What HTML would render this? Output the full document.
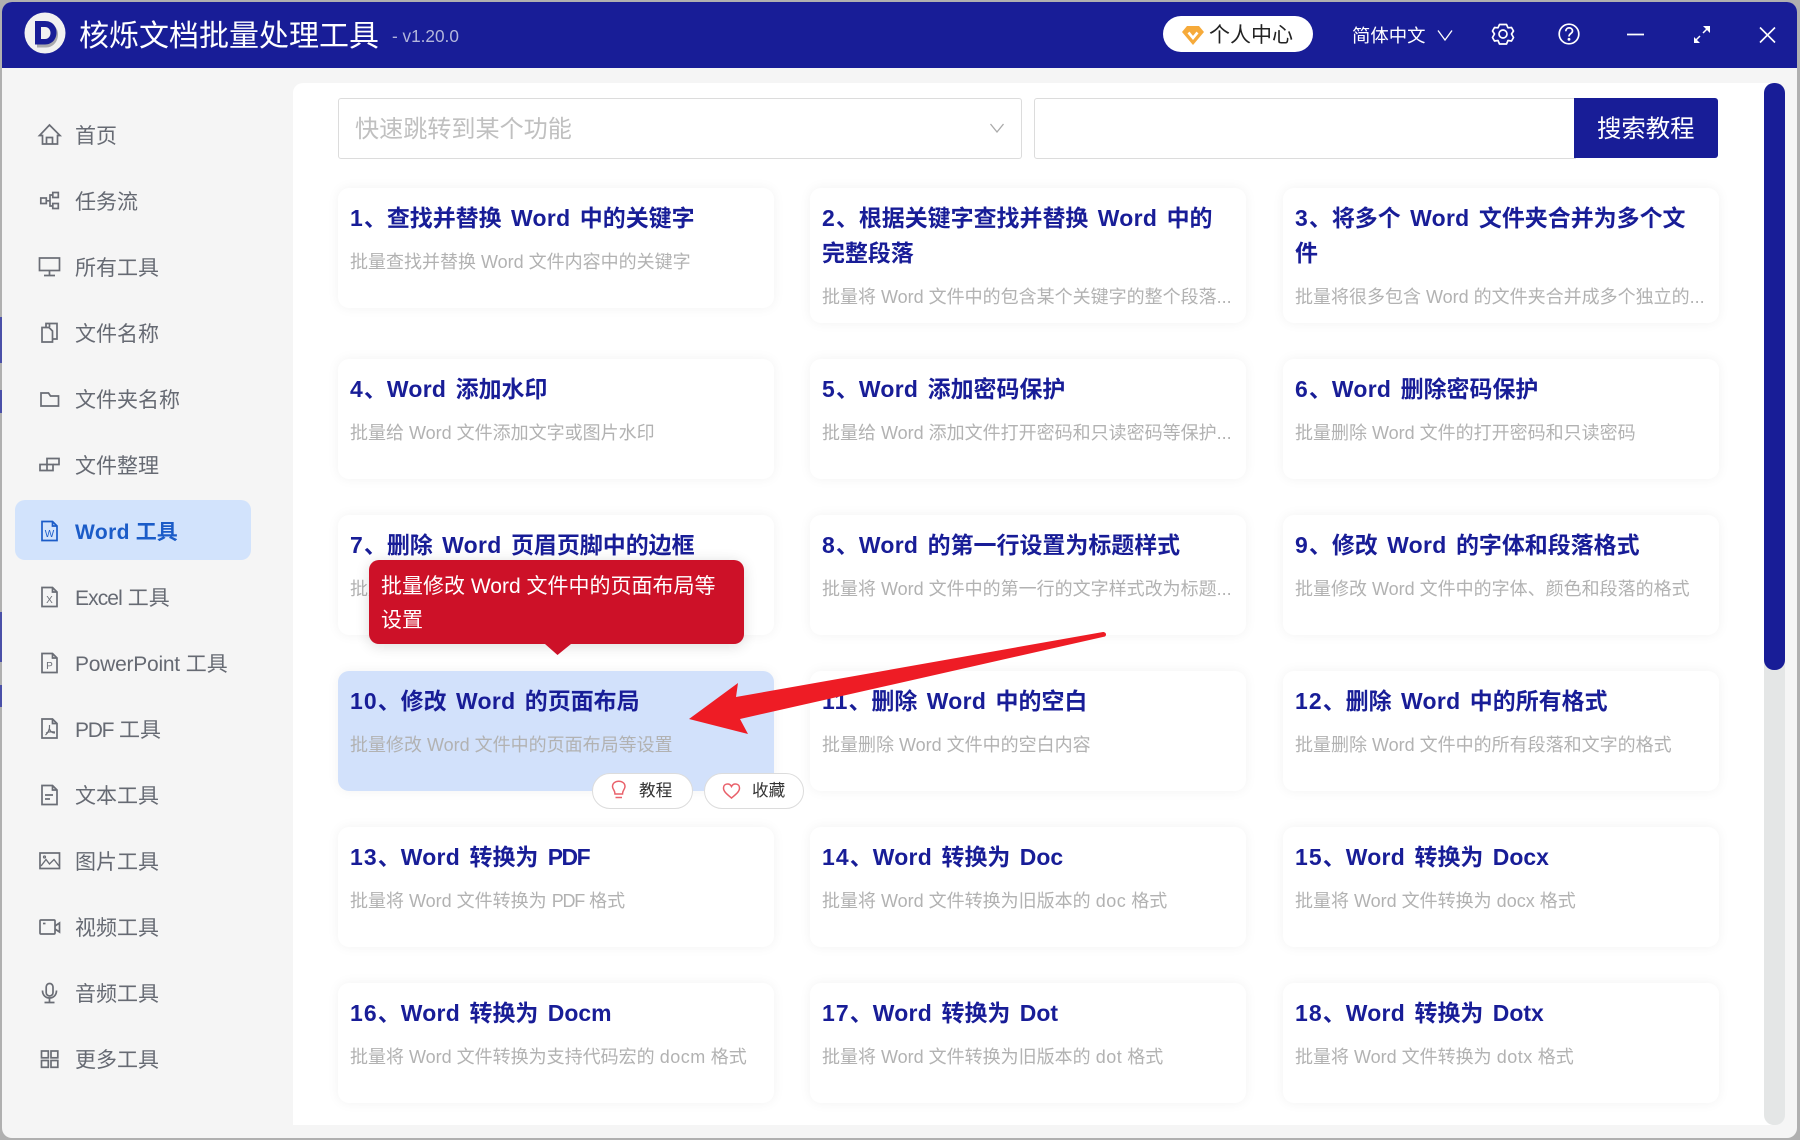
<!DOCTYPE html>
<html lang="zh-CN">
<head>
<meta charset="utf-8">
<title>核烁文档批量处理工具</title>
<style>
html,body{margin:0;padding:0;width:1800px;height:1140px;overflow:hidden;background:#b0b0b0;}
body{position:relative;font-family:"Liberation Sans","Noto Sans CJK SC",sans-serif;}
.a{position:absolute;}
.t{position:absolute;white-space:nowrap;}
#win{position:absolute;left:2px;top:2px;width:1795px;height:1136px;background:#f5f5f5;border-radius:10px;overflow:hidden;}
#head{position:absolute;left:0;top:0;width:100%;height:66px;background:#181d97;}
.nav{position:absolute;left:75px;font-size:21px;line-height:30px;color:#666a73;white-space:nowrap;}
.card{position:absolute;width:436px;height:120px;background:#fff;border-radius:11px;box-shadow:0 0 12px rgba(0,0,0,.055);}
.card b{position:absolute;left:12px;top:13px;width:416px;font-size:22.96px;line-height:34.5px;font-weight:700;color:#181d97;word-spacing:3px;}
.card b u{text-decoration:none;letter-spacing:.3px;}
.card b u.n{letter-spacing:1.1px;}
.card b u.p{letter-spacing:-1.5px;}
.card span{position:absolute;left:12px;top:60px;font-size:18px;line-height:29px;color:#b2b2b2;white-space:nowrap;}
.card span em{font-style:normal;letter-spacing:.5px;}
.card span em.p{letter-spacing:-1.2px;}
.tall{height:135px;}
.tall span{top:95px;}
.pill{position:absolute;top:773px;height:34px;background:#fff;border:1px solid #dcdcdc;border-radius:18px;}
.pill i{position:absolute;top:3px;font-style:normal;font-size:16.6px;line-height:28px;color:#333;white-space:nowrap;}
</style>
</head>
<body>
<div class="a" style="left:0;top:317px;width:2px;height:46px;background:#4a50a8"></div>
<div class="a" style="left:0;top:390px;width:2px;height:23px;background:#4a50a8"></div>
<div class="a" style="left:0;top:612px;width:2px;height:50px;background:#4a50a8"></div>
<div class="a" style="left:0;top:685px;width:2px;height:22px;background:#4a50a8"></div>

<div id="win">
  <div id="head"></div>
</div>

<!-- logo -->
<svg class="a" style="left:20px;top:8px" width="52" height="52" viewBox="0 0 52 52">
  <circle cx="25" cy="25" r="20.5" fill="#f1f1f1"/>
  <path d="M16 14H25C33 14 37 19 37 25C37 32 32 38 25 38H16Z" fill="#a9a9ad" transform="translate(1 1.5)"/>
  <path d="M15 13H25C32.5 13 36.500 18.500 36.500 24.500C36.500 31 32 36.500 25 36.500H15Z" fill="#181d97"/>
  <path d="M21 19V31H25C28.500 31 30.500 28 30.500 25C30.500 22 28.500 19 25 19Z" fill="#f1f1f1"/>
</svg>
<div class="t" style="left:79px;top:17px;font-size:30px;line-height:40px;color:#fff">核烁文档批量处理工具</div>
<div class="t" style="left:392px;top:22px;font-size:17.2px;line-height:28px;color:#b3b6dc">- v1.20.0</div>

<!-- pill -->
<div class="a" style="left:1163px;top:16px;width:150px;height:36px;background:#fff;border-radius:18px"></div>
<svg class="a" style="left:1180px;top:23px" width="26" height="24" viewBox="0 0 26 24">
  <path d="M7 3H19L24 9L13 22L2 9Z" fill="#f6aa3a"/>
  <path d="M8.500 9.500L13 15L17.500 9.500" fill="none" stroke="#fff" stroke-width="2.600"/>
</svg>
<div class="t" style="left:1209px;top:20px;font-size:21px;line-height:32px;color:#222">个人中心</div>
<div class="t" style="left:1352px;top:22px;font-size:18.4px;line-height:28px;color:#fff">简体中文</div>

<!-- header icons -->
<svg class="a" style="left:1430px;top:0" width="370" height="68" viewBox="1430 0 370 68" fill="none" stroke="#fff" stroke-width="1.700">
  <path d="M1438 30.500L1445 40L1452 30.500" stroke-width="1.300"/>
  <path d="M1499.500 24.500H1506.500L1508 27.800L1511.500 27.500L1513.500 31L1511.500 34L1513.500 37.500L1511.500 41L1508 40.500L1506.500 44H1499.500L1498 40.500L1494.500 41L1492.500 37.500L1494.500 34L1492.500 31L1494.500 27.500L1498 27.800Z" stroke-linejoin="round"/>
  <circle cx="1503" cy="34" r="4"/>
  <circle cx="1569" cy="34" r="9.800"/>
  <path d="M1565.800 31.300C1565.800 26.800 1572.500 26.800 1572.500 31C1572.500 33.500 1569 33.500 1569 36.500"/>
  <circle cx="1569" cy="39.300" r=".6" fill="#fff"/>
  <path d="M1627 34.500H1644" stroke-width="1.800"/>
  <path d="M1695 41L1700 36M1703 33L1708 28" stroke-width="1.500"/>
  <path d="M1694 37V43H1700Z" fill="#fff" stroke="none"/>
  <path d="M1703 26H1710V33Z" fill="#fff" stroke="none"/>
  <path d="M1760 27.500L1775 42.500M1775 27.500L1760 42.500" stroke-width="1.600"/>
</svg>

<!-- sidebar -->
<div class="a" style="left:15px;top:500px;width:236px;height:60px;background:#d2e3fc;border-radius:10px"></div>
<div class="nav" style="top:122px">首页</div>
<div class="nav" style="top:188px">任务流</div>
<div class="nav" style="top:254px">所有工具</div>
<div class="nav" style="top:320px">文件名称</div>
<div class="nav" style="top:386px">文件夹名称</div>
<div class="nav" style="top:452px">文件整理</div>
<div class="nav" style="top:518px;color:#1b5cc8;font-weight:700"><span style="letter-spacing:.4px">Word</span> 工具</div>
<div class="nav" style="top:584px"><span style="letter-spacing:-.9px">Excel</span> 工具</div>
<div class="nav" style="top:650px"><span style="letter-spacing:-.25px">PowerPoint</span> 工具</div>
<div class="nav" style="top:716px"><span style="letter-spacing:-1.3px">PDF</span> 工具</div>
<div class="nav" style="top:782px">文本工具</div>
<div class="nav" style="top:848px">图片工具</div>
<div class="nav" style="top:914px">视频工具</div>
<div class="nav" style="top:980px">音频工具</div>
<div class="nav" style="top:1046px">更多工具</div>

<svg class="a" style="left:0;top:0" width="255" height="1140" viewBox="0 0 255 1140" fill="none" stroke="#6a6d75" stroke-width="1.700">
  <path d="M49.500 125L39.500 135.500H42.500V144H57.500V135.500H60Z"/><path d="M46.500 144V137.500H52.500V144"/>
  <rect x="40.800" y="198" width="5.500" height="5.500"/><rect x="52.800" y="192.500" width="5.500" height="5"/><rect x="52.800" y="203.500" width="5.500" height="5"/><path d="M46.300 200.800H50V195H52.800M50 200.800V206H52.800"/>
  <rect x="39.500" y="258" width="20" height="12.500"/><path d="M49.500 270.500V275M44 275.500H55"/>
  <path d="M46 327V323.500H57V339H52.500"/><path d="M42 327.500H49L52.500 331V342H42Z"/><path d="M49.500 323.500V327"/>
  <path d="M41 393H48.500L50.500 396H58.500V406H41Z"/>
  <path d="M47 464V458.500H59V464.500H53"/><path d="M40 464.500H53V470.500H40ZM47 464.500V470.500"/>
  <g stroke="#1b5cc8"><path d="M42 521.500H52.500L57 526V540.500H42Z"/><path d="M52.500 521.500V526H57"/></g>
  <path d="M42 587.500H52.500L57 592V606.500H42Z"/><path d="M52.500 587.500V592H57"/>
  <path d="M42 653.500H52.500L57 658V672.500H42Z"/><path d="M52.500 653.500V658H57"/>
  <path d="M42 719H52.500L57 723.500V738H42Z"/><path d="M52.500 719V723.500H57"/>
  <path d="M49.500 725C50 729 48 733 45.500 735M49.500 729C50.500 732 53 733 55 733M46 733C49 731.500 52 731.500 55 732" stroke-width="1.200"/>
  <path d="M42 785.500H52.500L57 790V804.500H42Z"/><path d="M52.500 785.500V790H57"/><path d="M45 795H53M45 799H50"/>
  <rect x="40" y="853" width="19.500" height="15.500"/><path d="M41 866L46 859.500L49.500 864L54 859.500L59 866" stroke-width="1.400"/><circle cx="44.500" cy="857" r="1" stroke-width="1.200"/>
  <rect x="40" y="920" width="15" height="14" rx="1"/><path d="M55 926L59.500 923V932L55 929"/><path d="M43 923.500H45.500"/>
  <rect x="46.200" y="983.500" width="6.800" height="12.500" rx="3.400"/><path d="M42.500 990.500C42.500 1000.500 56.500 1000.500 56.500 990.500M49.500 998V1002M44.500 1002.500H54.500"/>
  <rect x="41.500" y="1051" width="6.800" height="6.800"/><rect x="51" y="1051" width="6.800" height="6.800"/><rect x="41.500" y="1060.500" width="6.800" height="6.800"/><rect x="51" y="1060.500" width="6.800" height="6.800"/>
  <g font-family="Liberation Sans,sans-serif" font-size="10" text-anchor="middle" stroke="none">
    <text x="49.500" y="537" fill="#1b5cc8">W</text>
    <text x="49.500" y="603" fill="#6a6d75">X</text>
    <text x="49.500" y="669" fill="#6a6d75">P</text>
  </g>
</svg>

<!-- main panel -->
<div class="a" style="left:293px;top:83px;width:1482px;height:1042px;background:#fff;border-radius:10px 0 0 0"></div>
<div class="a" style="left:1764px;top:83px;width:21px;height:1042px;background:#e4e6e6;border-radius:10px"></div>
<div class="a" style="left:1764px;top:83px;width:21px;height:587px;background:#181d97;border-radius:10px"></div>

<!-- search -->
<div class="a" style="left:338px;top:98px;width:682px;height:59px;background:#fff;border:1px solid #dcdcdc;border-radius:3px"></div>
<div class="t" style="left:355px;top:112px;font-size:24.1px;line-height:36px;color:#c0c0c0">快速跳转到某个功能</div>
<svg class="a" style="left:988px;top:121px" width="18" height="14" viewBox="0 0 18 14" fill="none" stroke="#aaa" stroke-width="1.300"><path d="M2.500 3L9 11L15.500 3"/></svg>
<div class="a" style="left:1034px;top:98px;width:540px;height:59px;background:#fff;border:1px solid #dcdcdc;border-radius:3px 0 0 3px"></div>
<div class="a" style="left:1574px;top:98px;width:144px;height:60px;background:#181d97;border-radius:0 3px 3px 0"></div>
<div class="t" style="left:1597px;top:112px;font-size:24.400px;line-height:36px;color:#fff">搜索教程</div>

<!-- cards -->
<div class="card" style="left:338px;top:188px"><b><u class="n">1</u>、查找并替换 <u>Word</u> 中的关键字</b><span>批量查找并替换 Word 文件内容中的关键字</span></div>
<div class="card tall" style="left:810px;top:188px"><b><u class="n">2</u>、根据关键字查找并替换 <u>Word</u> 中的<br>完整段落</b><span>批量将 Word 文件中的包含某个关键字的整个段落...</span></div>
<div class="card tall" style="left:1283px;top:188px"><b><u class="n">3</u>、将多个 <u>Word</u> 文件夹合并为多个文<br>件</b><span>批量将很多包含 Word 的文件夹合并成多个独立的...</span></div>

<div class="card" style="left:338px;top:359px"><b><u class="n">4</u>、<u>Word</u> 添加水印</b><span>批量给 Word 文件添加文字或图片水印</span></div>
<div class="card" style="left:810px;top:359px"><b><u class="n">5</u>、<u>Word</u> 添加密码保护</b><span>批量给 Word 添加文件打开密码和只读密码等保护...</span></div>
<div class="card" style="left:1283px;top:359px"><b><u class="n">6</u>、<u>Word</u> 删除密码保护</b><span>批量删除 Word 文件的打开密码和只读密码</span></div>

<div class="card" style="left:338px;top:515px"><b><u class="n">7</u>、删除 <u>Word</u> 页眉页脚中的边框</b><span>批量删除 Word 文件中的页眉页脚的边框</span></div>
<div class="card" style="left:810px;top:515px"><b><u class="n">8</u>、<u>Word</u> 的第一行设置为标题样式</b><span>批量将 Word 文件中的第一行的文字样式改为标题...</span></div>
<div class="card" style="left:1283px;top:515px"><b><u class="n">9</u>、修改 <u>Word</u> 的字体和段落格式</b><span>批量修改 Word 文件中的字体、颜色和段落的格式</span></div>

<div class="card" style="left:338px;top:671px;background:#d2e1fb"><b><u class="n">10</u>、修改 <u>Word</u> 的页面布局</b><span>批量修改 Word 文件中的页面布局等设置</span></div>
<div class="card" style="left:810px;top:671px"><b><u class="n">11</u>、删除 <u>Word</u> 中的空白</b><span>批量删除 Word 文件中的空白内容</span></div>
<div class="card" style="left:1283px;top:671px"><b><u class="n">12</u>、删除 <u>Word</u> 中的所有格式</b><span>批量删除 Word 文件中的所有段落和文字的格式</span></div>

<div class="card" style="left:338px;top:827px"><b><u class="n">13</u>、<u>Word</u> 转换为 <u class="p">PDF</u></b><span>批量将 Word 文件转换为 <em class="p">PDF</em> 格式</span></div>
<div class="card" style="left:810px;top:827px"><b><u class="n">14</u>、<u>Word</u> 转换为 Doc</b><span>批量将 Word 文件转换为旧版本的 <em>doc</em> 格式</span></div>
<div class="card" style="left:1283px;top:827px"><b><u class="n">15</u>、<u>Word</u> 转换为 Docx</b><span>批量将 Word 文件转换为 docx 格式</span></div>

<div class="card" style="left:338px;top:983px"><b><u class="n">16</u>、<u>Word</u> 转换为 Docm</b><span>批量将 Word 文件转换为支持代码宏的 <em>docm</em> 格式</span></div>
<div class="card" style="left:810px;top:983px"><b><u class="n">17</u>、<u>Word</u> 转换为 Dot</b><span>批量将 Word 文件转换为旧版本的 <em>dot</em> 格式</span></div>
<div class="card" style="left:1283px;top:983px"><b><u class="n">18</u>、<u>Word</u> 转换为 Dotx</b><span>批量将 Word 文件转换为 <em>dotx</em> 格式</span></div>

<!-- tooltip -->
<div class="a" style="left:369px;top:560px;width:375px;height:84px;background:#cd1128;border-radius:10px;box-shadow:0 2px 14px rgba(0,0,0,.14)"></div>
<svg class="a" style="left:545px;top:644px" width="26" height="11" viewBox="0 0 26 11"><path d="M0 0H26L12.500 11Z" fill="#cd1128"/></svg>
<div class="t" style="left:381px;top:570px;font-size:21px;line-height:33.500px;color:#fff">批量修改 Word 文件中的页面布局等<br>设置</div>

<!-- buttons -->
<div class="pill" style="left:592px;width:99px"><i style="left:46px">教程</i></div>
<div class="pill" style="left:704px;width:98px"><i style="left:47px">收藏</i></div>
<svg class="a" style="left:600px;top:775px" width="210" height="30" viewBox="600 775 210 30" fill="none" stroke="#e9606a" stroke-width="1.500">
  <path d="M615 794C615 790 612.500 789.500 612.500 786.500C612.500 779.500 625 779.500 625 786.500C625 789.500 622.500 790 622.500 794Z"/>
  <path d="M615.500 797.500H622"/>
  <path d="M731.500 798C728 795 723.500 792 723.500 788C723.500 783.500 729.500 782.500 731.500 786.500C733.500 782.500 739.500 783.500 739.500 788C739.500 792 735 795 731.500 798Z"/>
</svg>

<!-- arrow -->
<svg class="a" style="left:680px;top:625px" width="440" height="115" viewBox="680 625 440 115">
  <path d="M689 719L738 683L736 697L1103 632C1106 632 1107 635 1105 636.500L740 719L748 734Z" fill="#ee1c25"/>
</svg>
</body>
</html>
